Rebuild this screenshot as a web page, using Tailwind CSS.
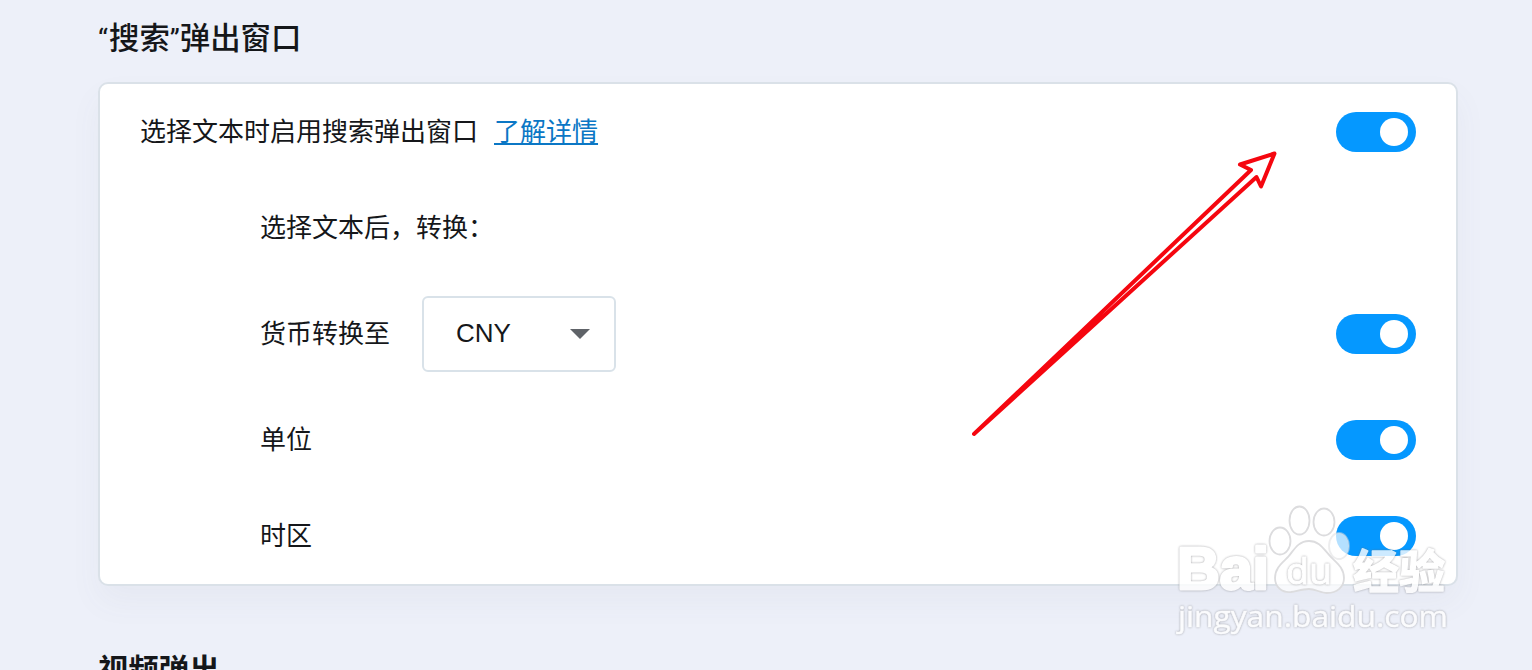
<!DOCTYPE html>
<html lang="zh-CN">
<head>
    <meta charset="UTF-8">
    <meta name="viewport" content="width=device-width, initial-scale=1.0">
    <title>设置</title>
    <script src="https://cdn.jsdelivr.net/npm/@tailwindcss/browser@4"></script>
</head>
<body class="relative h-[670px] overflow-hidden bg-[#edf0f9] font-['Inter','Noto_Sans_CJK_SC',sans-serif] text-[#15171a]">
    <main class="ml-[98px] w-[1360px]">
        <h1 class="h-[82px] pt-[15px] text-[30.4px] leading-[46px] font-medium"><span class="inline-block w-[11px] font-['Roboto'] text-[28px] font-normal">“</span>搜索<span class="inline-block w-[10px] font-['Roboto'] text-[28px] font-normal">”</span>弹出窗口</h1>

        <section class="rounded-[10px] border-2 border-[#dae1e8] bg-white px-10 text-[26px] shadow-[0_16px_32px_rgba(90,100,120,0.05)]">
            <div class="flex h-24 items-center">
                <span class="pb-0.5">选择文本时启用搜索弹出窗口</span>
                <a href="#" class="ml-4 pb-0.5 text-[#0b77c5] underline decoration-2 underline-offset-[2px]">了解详情</a>
                <button class="ml-auto flex h-10 w-20 items-center justify-end rounded-full bg-[#0598ff] pr-2"><span class="size-7 rounded-full bg-white"></span></button>
            </div>
            <div class="flex h-24 items-center pb-0.5 pl-[120px]">选择文本后，转换：</div>
            <div class="flex h-[116px] items-center pl-[120px]">
                <span class="pb-0.5">货币转换至</span>
                <div class="ml-8 flex h-[76px] w-[194px] items-center justify-between rounded-md border-2 border-[#d9e2e9] pr-6 pl-8">
                    <span class="pb-0.5 font-['Liberation_Sans']">CNY</span>
                    <svg class="h-[10px] w-5" viewBox="0 0 20 10"><path d="M0 0h20L10 10z" fill="#5f6368"/></svg>
                </div>
                <button class="ml-auto flex h-10 w-20 items-center justify-end rounded-full bg-[#0598ff] pr-2"><span class="size-7 rounded-full bg-white"></span></button>
            </div>
            <div class="flex h-24 items-center pl-[120px]">
                <span class="pb-0.5">单位</span>
                <button class="ml-auto flex h-10 w-20 items-center justify-end rounded-full bg-[#0598ff] pr-2"><span class="size-7 rounded-full bg-white"></span></button>
            </div>
            <div class="flex h-24 items-center pl-[120px]">
                <span class="pb-0.5">时区</span>
                <button class="ml-auto flex h-10 w-20 items-center justify-end rounded-full bg-[#0598ff] pr-2"><span class="size-7 rounded-full bg-white"></span></button>
            </div>
        </section>

        <h1 class="mt-[61px] text-[30.4px] leading-[46px] font-bold">视频弹出</h1>
    </main>

    <!-- arrow and watermark -->
    <svg class="pointer-events-none absolute inset-0" width="1532" height="670" viewBox="0 0 1532 670">
        <path d="M974 434L1251 170L1240 164.500L1274.500 153.500L1261 186.500L1256.500 177Z" fill="none" stroke="#f5060f" stroke-width="4" stroke-linejoin="round"/>
        <g fill="#fff" fill-opacity="0.7" stroke="#dcdcde" stroke-width="1.8">
            <ellipse cx="1280" cy="541" rx="10.500" ry="13.500"/>
            <ellipse cx="1299.500" cy="520.500" rx="10" ry="14"/>
            <ellipse cx="1324" cy="522" rx="10.500" ry="13.500"/>
            <ellipse cx="1339" cy="546" rx="10" ry="13" stroke-opacity="0.5"/>
            <path d="M1309 541c-11 0-15 9-21 16-6 6-13 11-13 21 0 9 7 15 16 14 6-1 12-3 18-3s12 4 18 4c10 0 17-6 17-15 0-10-7-15-13-21-7-7-11-16-22-16z"/>
        </g>
        <g class="font-['Open_Sans','Noto_Sans_CJK_SC',sans-serif] opacity-80 drop-shadow-[0_0_1px_rgba(110,110,115,0.75)]" fill="#fff" stroke="#fff" stroke-linejoin="round">
            <text class="font-['Liberation_Sans']" x="1177" y="589" font-size="60" font-weight="700" stroke-width="3" textLength="92" lengthAdjust="spacingAndGlyphs">Bai</text>
            <text x="1286" y="584" font-size="37" font-weight="500" stroke-width="1" textLength="46" lengthAdjust="spacingAndGlyphs">du</text>
            <text x="1353" y="588" font-size="46" font-weight="700" stroke-width="1.5" textLength="92" lengthAdjust="spacingAndGlyphs">经验</text>
            <text x="1178" y="627" font-size="30" font-weight="500" stroke-width="0.5" textLength="270" lengthAdjust="spacingAndGlyphs">jingyan.baidu.com</text>
        </g>
    </svg>
</body>
</html>
